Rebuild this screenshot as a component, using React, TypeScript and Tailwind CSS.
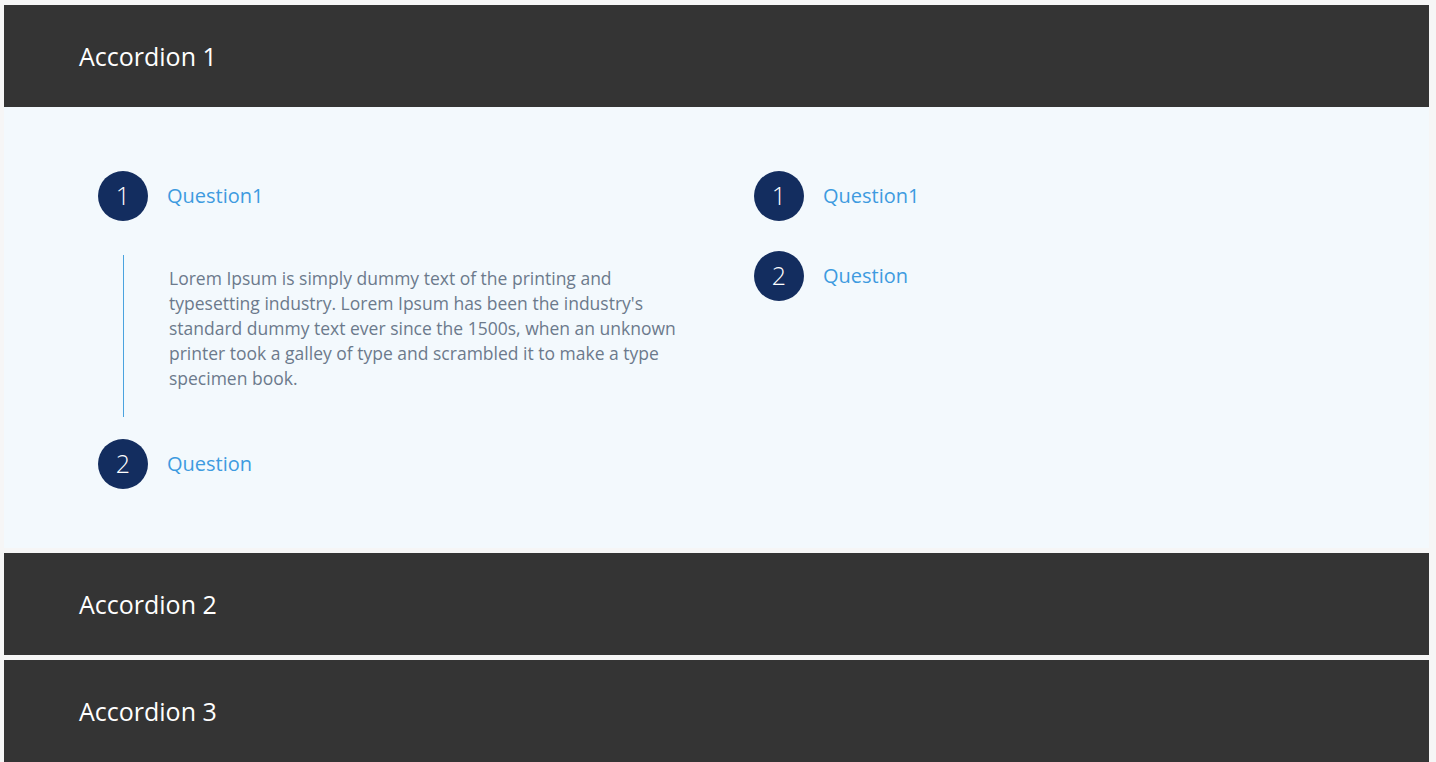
import { useState } from "react";

type Item = { q: string; a?: string };

const LOREM =
  "Lorem Ipsum is simply dummy text of the printing and typesetting industry. Lorem Ipsum has been the industry's standard dummy text ever since the 1500s, when an unknown printer took a galley of type and scrambled it to make a type specimen book.";

function Step({ n, item, open, onToggle }: { n: number; item: Item; open: boolean; onToggle: () => void }) {
  return (
    <div>
      <button onClick={onToggle} className="flex items-center text-left">
        <span className="flex h-[50px] w-[50px] shrink-0 items-center justify-center rounded-full bg-[#132d5f] text-[25px] font-light text-white">
          {n}
        </span>
        <span className="ml-[19px] text-[20px] text-[#3e9be0]">{item.q}</span>
      </button>
      {open && item.a && (
        <div className="ml-[25px] mt-[34px] -mb-[8px] border-l border-[#4aa3df] pl-[45px] pt-[11px] pb-[26px]">
          <p className="w-[520px] text-[17.5px] leading-[25px] text-[#6c7a8c]">{item.a}</p>
        </div>
      )}
    </div>
  );
}

function Column({ items, initial }: { items: Item[]; initial: number | null }) {
  const [open, setOpen] = useState<number | null>(initial);
  return (
    <div className="flex w-[656px] flex-col gap-[30px]">
      {items.map((it, i) => (
        <Step key={i} n={i + 1} item={it} open={open === i} onToggle={() => setOpen(open === i ? null : i)} />
      ))}
    </div>
  );
}

function Header({ title, onClick }: { title: string; onClick: () => void }) {
  return (
    <button
      onClick={onClick}
      className="flex h-[102px] w-full shrink-0 items-center bg-[#343434] pl-[75px] pt-[1px] text-left text-[25px] text-white"
    >
      {title}
    </button>
  );
}

export default function App() {
  const [active, setActive] = useState<number | null>(0);
  const items: Item[] = [{ q: "Question1", a: LOREM }, { q: "Question", a: LOREM }];

  return (
    <div className="min-h-screen bg-[#f6f6f6] pt-[5px] pl-[4px]" style={{ fontFamily: "'Open Sans', sans-serif" }}>
      <div className="flex w-[1425px] flex-col gap-[5px]">
        {["Accordion 1", "Accordion 2", "Accordion 3"].map((t, i) => (
          <div key={t}>
            <Header title={t} onClick={() => setActive(active === i ? null : i)} />
            {active === i && (
              <div className="flex bg-[#f3f9fd] pl-[94px] pt-[64px] pb-[59px]">
                <Column items={items} initial={0} />
                <Column items={items} initial={null} />
              </div>
            )}
          </div>
        ))}
      </div>
    </div>
  );
}
